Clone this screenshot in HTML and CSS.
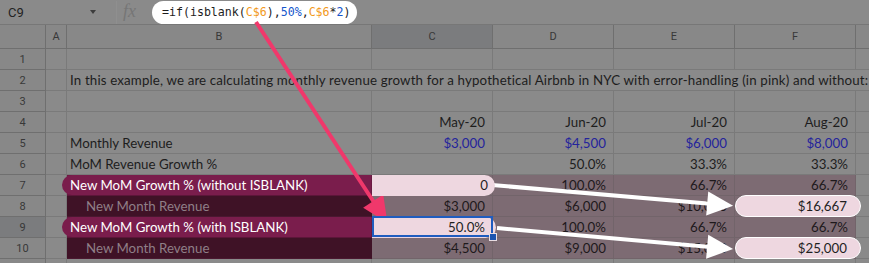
FILE: index.html
```html
<!DOCTYPE html>
<html lang="en">
<head>
  <meta charset="UTF-8">
  <title>ISBLANK example</title>
  <link rel="stylesheet" href="styles.css">
</head>
<body>
  <div class="screen">
    <div class="toolbar">
      <div class="name-box">C9</div>
      <div class="name-arrow"></div>
      <div class="fx">fx</div>
      <div class="formula"><span>=if(isblank(</span><span class="ref">C$6</span><span>),</span><span class="num">50%</span><span>,</span><span class="ref">C$6</span><span>*</span><span class="num">2</span><span>)</span></div>
    </div>

    <div class="sheet">
      <!-- column headers -->
      <div class="hd corner"></div>
      <div class="hd">A</div>
      <div class="hd">B</div>
      <div class="hd sel">C</div>
      <div class="hd">D</div>
      <div class="hd">E</div>
      <div class="hd">F</div>
      <div class="hd"></div>

      <!-- row 1 -->
      <div class="rh">1</div><div class="c"></div><div class="c"></div><div class="c"></div><div class="c"></div><div class="c"></div><div class="c"></div><div class="c"></div>

      <!-- row 2 -->
      <div class="rh">2</div><div class="c"></div>
      <div class="c intro">In this example, we are calculating monthly revenue growth for a hypothetical Airbnb in NYC with error-handling (in pink) and without:</div>

      <!-- row 3 -->
      <div class="rh">3</div><div class="c"></div><div class="c"></div><div class="c"></div><div class="c"></div><div class="c"></div><div class="c"></div><div class="c"></div>

      <!-- row 4 -->
      <div class="rh">4</div><div class="c"></div><div class="c"></div>
      <div class="c r">May-20</div><div class="c r">Jun-20</div><div class="c r">Jul-20</div><div class="c r">Aug-20</div><div class="c"></div>

      <!-- row 5 -->
      <div class="rh">5</div><div class="c"></div><div class="c">Monthly Revenue</div>
      <div class="c r blue">$3,000</div><div class="c r blue">$4,500</div><div class="c r blue">$6,000</div><div class="c r blue">$8,000</div><div class="c"></div>

      <!-- row 6 -->
      <div class="rh">6</div><div class="c"></div><div class="c">MoM Revenue Growth %</div>
      <div class="c r"></div><div class="c r">50.0%</div><div class="c r">33.3%</div><div class="c r">33.3%</div><div class="c"></div>

      <!-- row 7 -->
      <div class="rh">7</div><div class="c"></div>
      <div class="c label"><span class="label-pill">New MoM Growth % (without ISBLANK)</span></div>
      <div class="c r tint"><span class="pill pill-c">0</span></div>
      <div class="c r tint">100.0%</div><div class="c r tint">66.7%</div><div class="c r tint">66.7%</div><div class="c"></div>

      <!-- row 8 -->
      <div class="rh">8</div><div class="c"></div>
      <div class="c sub">New Month Revenue</div>
      <div class="c r tint">$3,000</div><div class="c r tint">$6,000</div><div class="c r tint">$10,000</div>
      <div class="c r tint"><span class="pill pill-f">$16,667</span></div><div class="c"></div>

      <!-- row 9 -->
      <div class="rh sel">9</div><div class="c"></div>
      <div class="c label"><span class="label-pill">New MoM Growth % (with ISBLANK)</span></div>
      <div class="c r tint active"><span class="pill pill-c2">50.0%</span><span class="selection"></span><span class="handle"></span></div>
      <div class="c r tint">100.0%</div><div class="c r tint">66.7%</div><div class="c r tint">66.7%</div><div class="c"></div>

      <!-- row 10 -->
      <div class="rh">10</div><div class="c"></div>
      <div class="c sub">New Month Revenue</div>
      <div class="c r tint">$4,500</div><div class="c r tint">$9,000</div><div class="c r tint">$15,000</div>
      <div class="c r tint"><span class="pill pill-f">$25,000</span></div><div class="c"></div>

      <!-- row 11 -->
      <div class="rh"></div><div class="c"></div><div class="c"></div><div class="c"></div><div class="c"></div><div class="c"></div><div class="c"></div><div class="c"></div>
    </div>

    <svg class="arrows" width="869" height="263" viewBox="0 0 869 263">
      <!-- formula to C9 -->
      <g transform="translate(256 22) rotate(56.8)">
        <line x1="0" y1="0" x2="222" y2="0" stroke="#f0386b" stroke-width="4"/>
        <polygon points="240,0 214,-12 214,12" fill="#f0386b"/>
      </g>
      <!-- C7 to F8 -->
      <g transform="translate(492 185) rotate(4.9)">
        <line x1="0" y1="0" x2="222" y2="0" stroke="#ffffff" stroke-width="4"/>
        <polygon points="242,0 216,-12 216,12" fill="#ffffff"/>
      </g>
      <!-- C9 to F10 -->
      <g transform="translate(497 228) rotate(5.1)">
        <line x1="0" y1="0" x2="217" y2="0" stroke="#ffffff" stroke-width="4"/>
        <polygon points="237,0 211,-12 211,12" fill="#ffffff"/>
      </g>
    </svg>
  </div>
</body>
</html>
```

FILE: styles.css
```css
body {
  margin: 0;
  background-color: #8a8a8a;
  font-family: Lato, "Open Sans", sans-serif;
  overflow: hidden;
}
.screen {
  position: relative;
  width: 869px;
  height: 263px;
  overflow: hidden;
}
.toolbar {
  display: flex;
  align-items: center;
  height: 24px;
  border-top: 1px solid #7a7a7a;
  border-bottom: 1px solid #777;
  box-sizing: content-box;
  margin-top: -1px;
}
.name-box {
  width: 80px;
  padding-left: 8px;
  font-family: Roboto, sans-serif;
  font-size: 13px;
  color: #232323;
}
.name-arrow {
  width: 0;
  height: 0;
  border-left: 3px solid transparent;
  border-right: 3px solid transparent;
  border-top: 4px solid #3d3d3d;
  margin-left: 2px;
}
.fx {
  margin-left: 20px;
  border-left: 1px solid #8f8f8f;
  padding: 0 0 2px 6px;
  font-family: "Liberation Serif", serif;
  font-style: italic;
  font-size: 18px;
  color: #767676;
  width: 22px;
}
.formula {
  margin-left: 7px;
  height: 23px;
  width: 195px;
  padding-left: 10px;
  background-color: #ffffff;
  border-radius: 12px;
  display: flex;
  align-items: center;
  font-family: "DejaVu Sans Mono", monospace;
  font-size: 11.6px;
  color: #1d1d1d;
  white-space: pre;
}
.formula .ref { color: #f29a1c; }
.formula .num { color: #1556cc; }

.sheet {
  display: grid;
  grid-template-columns: 46px 21px 305px 121px 121px 121px 121px 14px;
  grid-template-rows: 24px;
  grid-auto-rows: 21px;
}
.sheet > div {
  box-sizing: border-box;
  border-right: 1px solid #7a7a7a;
  border-bottom: 1px solid #7a7a7a;
}
.hd, .rh {
  display: flex;
  align-items: center;
  justify-content: center;
  font-family: Roboto, sans-serif;
  font-size: 11px;
  color: #383838;
  background-color: #888888;
  border-right-color: #6f6f6f !important;
  border-bottom-color: #6f6f6f !important;
}
.hd.sel, .rh.sel {
  background-color: #7b7c7e;
}
.c {
  display: flex;
  align-items: center;
  padding: 0 7px 0 3px;
  font-size: 13.3px;
  color: #1d1d1d;
  white-space: nowrap;
  position: relative;
}
.c.r {
  justify-content: flex-end;
}
.c.blue {
  color: #24249c;
}
.c.intro {
  grid-column: 3 / -1;
  border-right: none !important;
  overflow: visible;
  letter-spacing: 0.15px;
}
.c.tint {
  background-color: #7d6b73;
  color: #1e191b;
  border-right-color: #72646a;
  border-bottom-color: #72646a;
}
.c.label {
  background-color: #6a1a42;
  border-right-color: #6a1a42;
  border-bottom-color: #5c1639;
  padding: 0;
}
.label-pill {
  display: flex;
  align-items: center;
  height: 100%;
  width: 100%;
  margin-left: -5px;
  padding-left: 8px;
  border-radius: 11px 0 0 11px;
  background-color: #7a1d4c;
  color: #ffffff;
}
.c.sub {
  background-color: #3f1226;
  border-right-color: #3f1226;
  border-bottom-color: #4a1830;
  color: #8f7f87;
  padding-left: 19px;
}
.pill {
  display: flex;
  align-items: center;
  justify-content: flex-end;
  height: 21px;
  background-color: #eed7e0;
  color: #1f1f1f;
  position: relative;
  z-index: 1;
  flex: none;
  box-sizing: border-box;
}
.pill-c {
  margin: 0 -10px 0 -3px;
  width: calc(100% + 13px);
  padding-right: 7px;
  border-radius: 0 11px 11px 0;
}
.pill-c2 {
  margin: 0 -11px 0 -3px;
  width: calc(100% + 14px);
  padding-right: 11px;
  border-radius: 0 11px 11px 0;
}
.pill-f {
  margin: 0 -13px 0 -3px;
  width: calc(100% + 16px);
  padding-right: 13px;
  border-radius: 11px;
  border: 1.5px solid #ffffff;
  height: 22px;
}
.selection {
  position: absolute;
  left: 0;
  top: -1px;
  width: 121px;
  height: 21px;
  box-sizing: border-box;
  border: 2px solid #1f5cbf;
  z-index: 2;
}
.handle {
  position: absolute;
  left: 117px;
  top: 16px;
  width: 6px;
  height: 6px;
  background-color: #1c54b0;
  border: 1px solid #e9dde2;
  z-index: 3;
}
.arrows {
  position: absolute;
  left: 0;
  top: 0;
  pointer-events: none;
}
```
